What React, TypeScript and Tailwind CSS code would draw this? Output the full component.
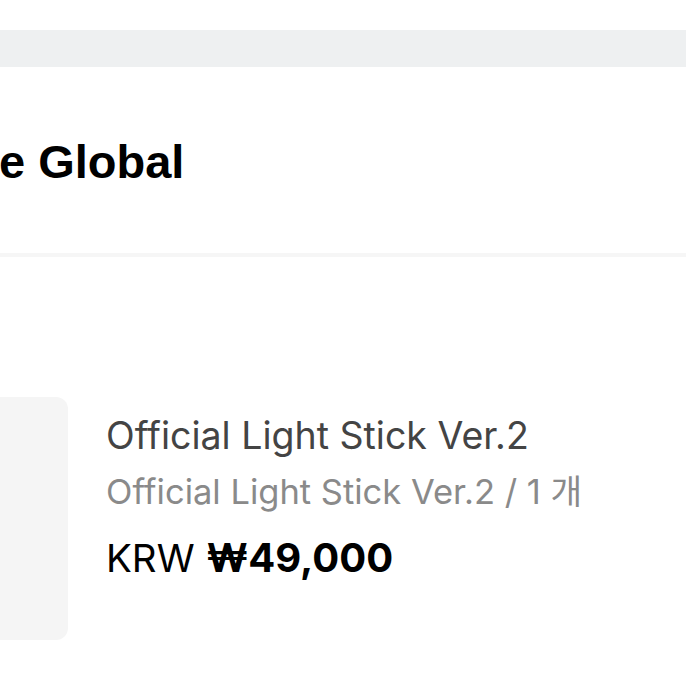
export default function App() {
  return (
    <div className="h-[686px] w-[686px] overflow-hidden bg-white">
      <div className="h-[30px]" />
      <div className="h-[37px] bg-[#eef0f1]" />
      <header className="flex h-[186px] items-center overflow-hidden">
        <h1 className="-ml-[1px] whitespace-nowrap pt-[3px] font-['Liberation_Sans',sans-serif] text-[47px] font-bold leading-none text-black">
          e Global
        </h1>
      </header>
      <div className="h-[4px] bg-[#f6f6f6]" />
      <section className="mt-[140px] flex items-start gap-[38px]">
        <div className="-ml-[175px] h-[243px] w-[243px] shrink-0 rounded-[12px] bg-[#f5f5f5]" />
        <div className="flex flex-col pt-[17px] font-['Inter',sans-serif]">
          <p className="whitespace-nowrap text-[37.5px] leading-[44px] text-[#444]">Official Light Stick Ver.2</p>
          <p className="mt-[14px] whitespace-nowrap font-['Inter','Noto_Sans_CJK_KR',sans-serif] text-[34.5px] leading-[40px] text-[#8a8a8a]">
            Official Light Stick Ver.2 / 1 개
          </p>
          <p className="mt-[22px] flex items-baseline gap-[12px] whitespace-nowrap leading-[48px] text-black">
            <span className="text-[38.5px]">KRW</span>
            <span className="text-[40px] font-bold">₩49,000</span>
          </p>
        </div>
      </section>
    </div>
  );
}
